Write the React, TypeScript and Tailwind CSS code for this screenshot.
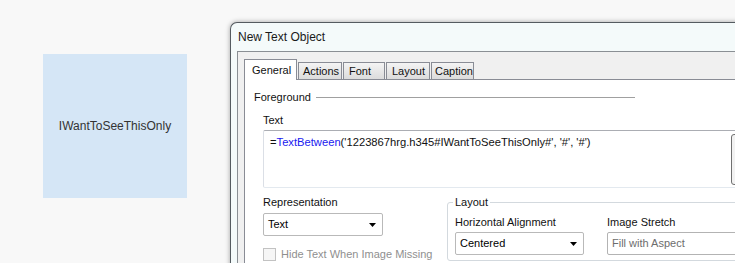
const Arrow = () => (
  <svg width="7" height="4" viewBox="0 0 7 4" className="shrink-0">
    <polygon points="0,0 7,0 3.5,4" fill="#000" />
  </svg>
);

const tabs = [
  { label: "General", w: "w-[53px]", pl: "pl-[7px]", active: true },
  { label: "Actions", w: "w-[44px]", pl: "pl-[4px]", active: false },
  { label: "Font", w: "w-[42px]", pl: "pl-[5px]", active: false },
  { label: "Layout", w: "w-[44px]", pl: "pl-[5px]", active: false },
  { label: "Caption", w: "w-[43px]", pl: "pl-[3px]", active: false },
];

export default function App() {
  return (
    <div className="flex h-[263px] w-[735px] items-start overflow-hidden bg-[#f8f8f8] font-['Liberation_Sans',Arial,sans-serif]">
      {/* text object on the sheet */}
      <div className="ml-[43px] mt-[54px] flex h-[144px] w-[144px] shrink-0 items-center justify-center bg-[#d5e6f6] text-[12px] text-[#333]">
        IWantToSeeThisOnly
      </div>

      {/* properties dialog */}
      <div className="ml-[43px] mt-[22px] h-[260px] w-[580px] shrink-0 rounded-tl-[7px] border-l border-t border-[#555b60] bg-[#f4fafa] pl-[6px] shadow-[0_0_5px_rgba(0,0,0,0.35)]">
        <div className="flex h-[28px] items-center pl-[1px] text-[12px] text-[#1a1a1a]">New Text Object</div>

        <div className="h-full border-l border-t border-[#8a8f94] bg-[#f0f0f0] pl-[6px]">
          {/* tab strip */}
          <div className="flex h-[27px] items-end text-[11px] leading-[13px] text-[#111]">
            {tabs.map((t) =>
              t.active ? (
                <div
                  key={t.label}
                  className={`relative z-10 -mb-px flex h-[21px] items-center border-x border-t border-[#898c95] bg-white ${t.w} ${t.pl}`}
                >
                  {t.label}
                </div>
              ) : (
                <div
                  key={t.label}
                  className={`ml-px flex h-[17px] items-center border-x border-t border-[#898c95] bg-linear-to-b from-[#f4f4f4] to-[#dcdcdc] first:ml-0 ${t.w} ${t.pl}`}
                >
                  {t.label}
                </div>
              )
            )}
          </div>

          {/* tab panel */}
          <div className="h-full border-l border-t border-[#898c95] bg-white pl-[9px] text-[11px] leading-[13px] text-[#111]">
            <div className="mt-[11px] flex h-[13px] w-[381px] items-center">
              <span>Foreground</span>
              <div className="ml-[5px] h-px flex-1 bg-[#a0a0a0]" />
            </div>

            <div className="pl-[9px]">
              <div className="mt-[10px] h-[13px]">Text</div>
              <div className="mt-[3px] flex h-[58px] w-[520px] rounded-[2px] border border-x-[#dbdfe6] border-b-[#e3e9ef] border-t-[#abadb3]">
                <div className="w-[467px] pl-[6px] pt-[5px] text-[11.2px]">
                  =<span className="text-[#2020f0]">TextBetween</span>('1223867hrg.h345#IWantToSeeThisOnly#', '#', '#')
                </div>
                <div className="mt-[3px] h-[51px] w-[22px] rounded-[3px] border border-[#707070] bg-[#f2f2f2]" />
              </div>

              <div className="mt-[8px] flex">
                {/* representation */}
                <div className="w-[184px] shrink-0">
                  <div className="h-[13px]">Representation</div>
                  <div className="mt-[4px] flex h-[23px] w-[120px] items-center justify-between rounded-[2px] border border-[#b9b9b9] bg-white pl-[4px] pr-[6px] text-[#000]">
                    <span>Text</span>
                    <Arrow />
                  </div>
                  <div className="mt-[12px] flex items-center gap-[5px] text-[#8f8f8f]">
                    <div className="h-[13px] w-[13px] border border-[#c2c2c2] bg-[#f6f6f6]" />
                    <span>Hide Text When Image Missing</span>
                  </div>
                </div>

                {/* layout group */}
                <fieldset className="w-[400px] shrink-0 rounded-[3px] border border-[#d3d9de] pl-[7px]">
                  <legend className="-ml-[2px] px-[2px] leading-[13px]">Layout</legend>
                  <div className="mt-[7px] flex gap-[23px]">
                    <div className="w-[129px] shrink-0">
                      <div className="h-[13px]">Horizontal Alignment</div>
                      <div className="mt-[3px] flex h-[23px] items-center justify-between rounded-[2px] border border-[#b9b9b9] bg-white pl-[4px] pr-[6px] text-[#000]">
                        <span>Centered</span>
                        <Arrow />
                      </div>
                    </div>
                    <div className="w-[200px] shrink-0">
                      <div className="h-[13px]">Image Stretch</div>
                      <div className="mt-[3px] flex h-[23px] items-center rounded-[2px] border border-[#b3b3b3] bg-white pl-[4px] text-[#6d6d6d]">
                        Fill with Aspect
                      </div>
                    </div>
                  </div>
                </fieldset>
              </div>
            </div>
          </div>
        </div>
      </div>
    </div>
  );
}
